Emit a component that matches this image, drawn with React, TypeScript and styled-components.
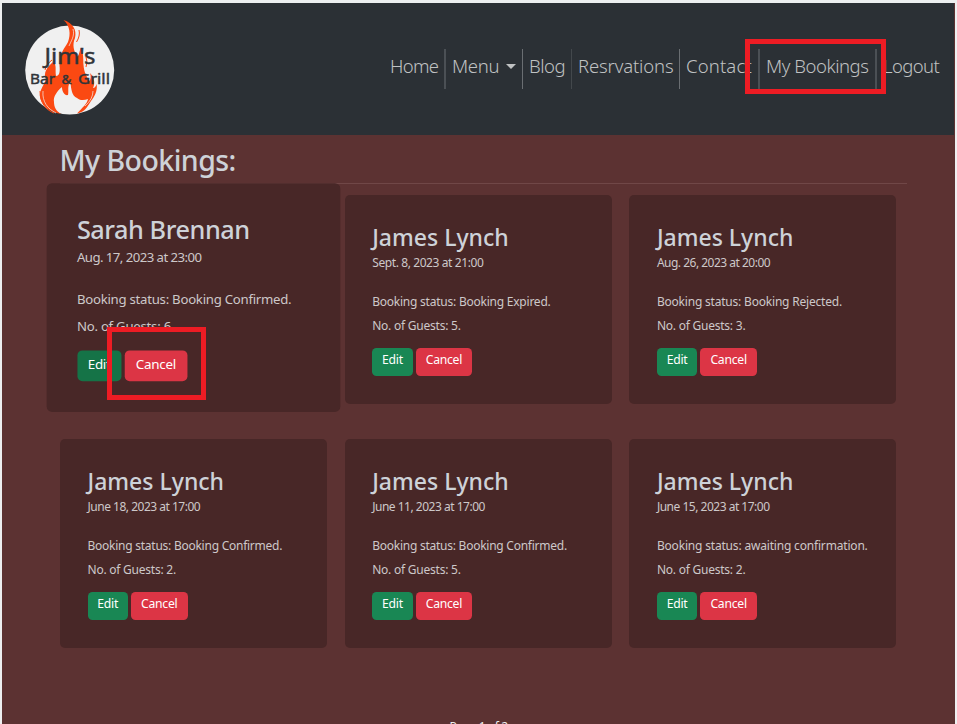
import React from "react";
import styled, { createGlobalStyle } from "styled-components";

const GlobalStyle = createGlobalStyle`
  * { box-sizing: border-box; }
  html, body { margin: 0; height: 100%; overflow: hidden; }
  body { background: #edeff0; font-family: "Noto Sans", sans-serif; }
  h1, h2, p { margin: 0; }
`;

const Page = styled.div`
  position: relative;
  height: 724px;
  padding: 3px 2px 0;
  overflow: hidden;
`;

const Navbar = styled.header`
  height: 132px;
  padding: 0 8px 0 16px;
  display: flex;
  justify-content: space-between;
  align-items: center;
  background: #2b3035;
  border-right: 1px solid #5c3232;
`;

const Logo = styled.svg`
  width: 104px;
  height: 104px;
  margin-bottom: 4px;
  flex: none;
`;

const NavList = styled.nav`
  display: flex;
  height: 40px;
`;

const NavItem = styled.a<{ $width: number; $spacing?: number; $line?: number; $tone?: string }>`
  width: ${(p) => p.$width}px;
  height: 40px;
  padding: 0 0 6px 6px;
  border-right: ${(p) => p.$line ?? 0}px solid ${(p) => p.$tone ?? "#4b5055"};
  display: flex;
  align-items: center;
  font-size: 18.5px;
  font-weight: 300;
  line-height: 34px;
  letter-spacing: ${(p) => p.$spacing ?? 0}px;
  color: #c0c2c3;
  white-space: nowrap;
`;

const Caret = styled.span`
  margin: 1px 0 0 7px;
  border-top: 5.5px solid #c0c2c3;
  border-left: 5.5px solid transparent;
  border-right: 5.5px solid transparent;
`;

const Main = styled.main`
  height: 589px;
  padding: 0 48px 0 58px;
  background: #5c3232;
`;

const Title = styled.h1`
  height: 49px;
  border-bottom: 1px solid #704747;
  font-size: 28.5px;
  font-weight: 500;
  line-height: 50px;
  letter-spacing: -0.55px;
  text-indent: -0.5px;
  color: #ced2d8;
`;

const CardGrid = styled.section`
  display: grid;
  grid-template-columns: repeat(3, 267px);
  grid-auto-rows: 208.3px;
  column-gap: 17.7px;
  row-gap: 35.7px;
  padding-top: 11.4px;
`;

const Card = styled.article<{ $raised?: boolean }>`
  padding: 27.6px 0 0 27.5px;
  border-radius: 5px;
  background: #482727;
  transform: ${(p) => (p.$raised ? "translateY(-1.4px) scale(1.1)" : "none")};
  white-space: nowrap;
`;

const Name = styled.h2<{ $spacing: number }>`
  font-size: 23px;
  font-weight: 500;
  line-height: 28px;
  letter-spacing: ${(p) => p.$spacing}px;
  color: #ced2d8;
`;

const Line = styled.p<{ $spacing: number }>`
  font-size: 12px;
  line-height: 24px;
  letter-spacing: ${(p) => p.$spacing}px;
  color: #cdc8c9;
`;

const Details = styled.div`
  margin-top: 14.6px;
`;

const Actions = styled.div`
  display: flex;
  gap: 3px;
  margin-top: 10.3px;
`;

const Button = styled.button<{ $kind: "edit" | "editActive" | "cancel" }>`
  width: ${(p) => (p.$kind === "cancel" ? 56.5 : 40.5)}px;
  height: 28px;
  padding: 0 0 3px;
  border: 0;
  border-radius: 4.5px;
  font: 400 12.2px/24px "Noto Sans", sans-serif;
  letter-spacing: -0.25px;
  color: #fff;
  background: ${(p) => ({ edit: "#198754", editActive: "#157347", cancel: "#dc3545" })[p.$kind]};
`;

const Pager = styled.p`
  margin: 70px 0 0 389.5px;
  font-size: 12px;
  line-height: 18px;
  letter-spacing: -0.4px;
  color: #eee;
`;

const Marker = styled.div<{ $x: number; $y: number; $w: number; $h: number }>`
  position: absolute;
  left: ${(p) => p.$x}px;
  top: ${(p) => p.$y}px;
  width: ${(p) => p.$w}px;
  height: ${(p) => p.$h}px;
  border: 5px solid #ed1c24;
`;

const bookings = [
  { name: "Sarah Brennan", date: "Aug. 17, 2023 at 23:00", status: "Booking Confirmed.", guests: 6, dateGap: -0.5, nameGap: -0.42, gap: -0.24 },
  { name: "James Lynch", date: "Sept. 8, 2023 at 21:00", status: "Booking Expired.", guests: 5, dateGap: -0.4, nameGap: 0, gap: -0.23 },
  { name: "James Lynch", date: "Aug. 26, 2023 at 20:00", status: "Booking Rejected.", guests: 3, dateGap: -0.5, nameGap: 0, gap: -0.2 },
  { name: "James Lynch", date: "June 18, 2023 at 17:00", status: "Booking Confirmed.", guests: 2, dateGap: -0.49, nameGap: 0, gap: -0.25 },
  { name: "James Lynch", date: "June 11, 2023 at 17:00", status: "Booking Confirmed.", guests: 5, dateGap: -0.49, nameGap: 0, gap: -0.25 },
  { name: "James Lynch", date: "June 15, 2023 at 17:00", status: "awaiting confirmation.", guests: 2, dateGap: -0.49, nameGap: 0, gap: -0.18 },
];

function BarLogo() {
  return (
    <Logo viewBox="18 15 104 104">
      <circle cx="69.7" cy="70" r="44.5" fill="#f0f0f0" />
      <path
        fill="#fb4912"
        d="M63.5 20C73 23 77 30 75 38C72 45 74 50 76 55C78 59 79 54 80.500 48C84 53 83 59 83.500 65C84 73 87 77 89.500 81C91 79 91 76 90 73C95 78 95 84 93 88C95 88 96 86 96.500 84C98 91 94 97 91 101C87 107 85 112 77 113.500C83 107 87 104 88 99C83 101 79 100 77 98C72 96 71 89 70.500 82C67 85 69 91 68 95C65 96 62 92 62 87C57 91 53 97 54 102C54 107 56 111 61 114C49 112 43 106 40.500 99C38 91 44 86 46 79C43 73 47 67 53 62C57 64 55 70 56 76C60 76 60 70 59.500 66C59 53 65 48 68 42C71 34 70 26 63.500 20Z"
      />
      <path fill="none" stroke="#fb4912" strokeWidth="1" d="M79 30C80 34 79 38 76.500 42M52 60C48 63 46 66 45 70M40 91C40 103 46 110 54 113M86 57Q88 62 86 67" />
      <path fill="none" stroke="#f0f0f0" strokeWidth=".7" d="M43 91C42 102 48 109 56 113M73 29C75 36 71 41 69 46M93 91Q93 99 85 106" />
      <g
        fill="#303438"
        stroke="#303438"
        strokeWidth=".45"
        fontFamily='"Noto Sans", sans-serif'
        fontWeight="400"
      >
        <text x="44.500" y="64" fontSize="21.500" textLength="51" lengthAdjust="spacingAndGlyphs">Jim's</text>
        <text x="30" y="83.500" fontSize="14.500" textLength="25" lengthAdjust="spacingAndGlyphs">Bar</text>
        <text x="61.500" y="83.500" fontSize="13" textLength="10" lengthAdjust="spacingAndGlyphs">&amp;</text>
        <text x="78" y="83.500" fontSize="15" textLength="32" lengthAdjust="spacingAndGlyphs">Grill</text>
      </g>
    </Logo>
  );
}

export default function App() {
  return (
    <>
      <GlobalStyle />
      <Page>
        <Navbar>
          <BarLogo />
          <NavList>
            <NavItem $width={62} $line={2} $spacing={-0.7}>Home</NavItem>
            <NavItem $width={77} $line={1} $tone="#6a6e72" $spacing={-0.3}>Menu<Caret /></NavItem>
            <NavItem $width={49} $line={1} $tone="#43484c" $spacing={-0.5}>Blog</NavItem>
            <NavItem $width={108} $line={1} $tone="#6a6e72" $spacing={-0.15}>Resrvations</NavItem>
            <NavItem $width={80} $line={2} $spacing={0.15}>Contact</NavItem>
            <NavItem $width={117} $line={2} $spacing={-0.45}>My Bookings</NavItem>
            <NavItem $width={69} $spacing={-0.6}>Logout</NavItem>
          </NavList>
        </Navbar>
        <Main>
          <Title>My Bookings:</Title>
          <CardGrid>
            {bookings.map((b, i) => (
              <Card key={i} $raised={i === 0}>
                <Name $spacing={b.nameGap}>{b.name}</Name>
                <Line $spacing={b.dateGap}>{b.date}</Line>
                <Details>
                  <Line $spacing={b.gap}>Booking status: {b.status}</Line>
                  <Line $spacing={-0.23}>No. of Guests: {b.guests}.</Line>
                </Details>
                <Actions>
                  <Button $kind={i === 0 ? "editActive" : "edit"}>Edit</Button>
                  <Button $kind="cancel">Cancel</Button>
                </Actions>
              </Card>
            ))}
          </CardGrid>
          <Pager>Page 1 of 2</Pager>
        </Main>
        <Marker $x={745} $y={39} $w={141} $h={55} />
        <Marker $x={107} $y={327} $w={99} $h={73} />
      </Page>
    </>
  );
}
